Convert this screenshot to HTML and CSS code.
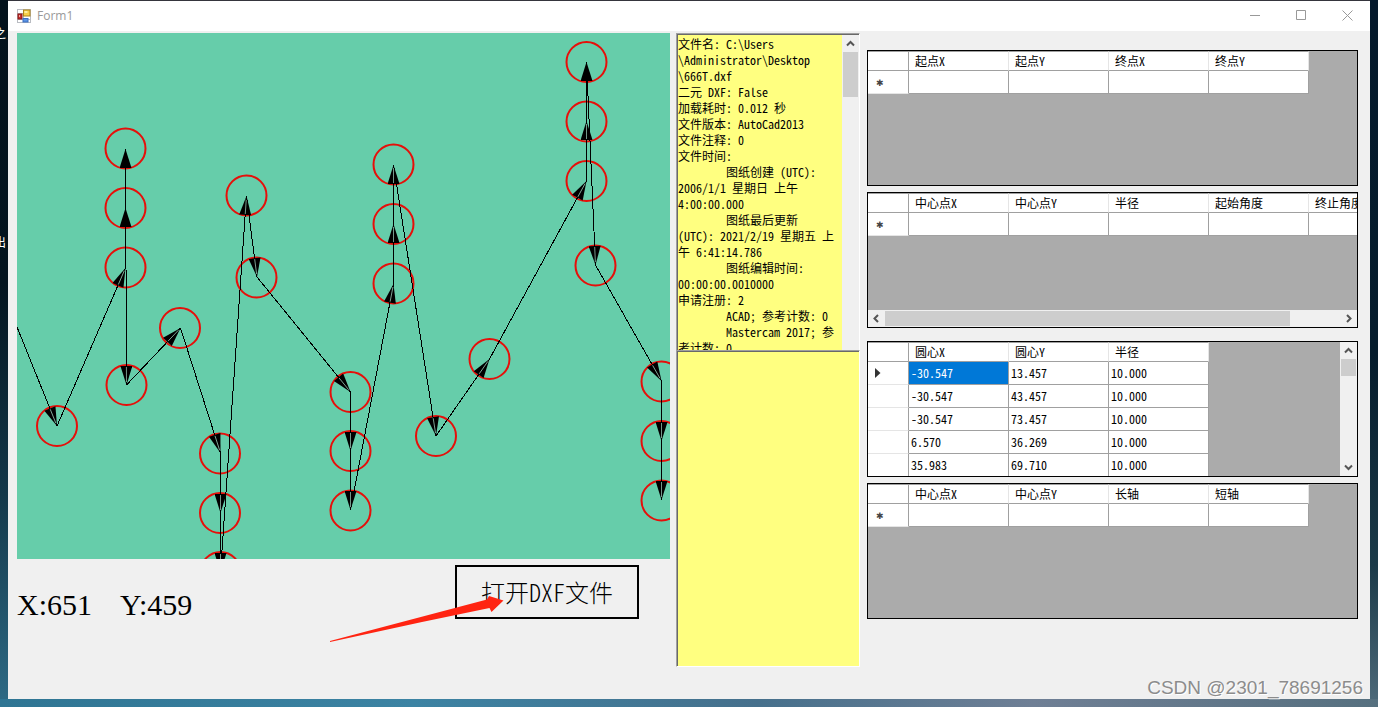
FILE: index.html
```html
<!DOCTYPE html>
<html lang="zh-CN">
<head>
<meta charset="utf-8">
<title>Form1</title>
<link rel="stylesheet" href="styles.css">
</head>
<body>
<span class="desk-label desk-label-a">之</span>
<span class="desk-label desk-label-b">出</span>
<main class="window">
  <header class="titlebar">
    <svg class="app-icon" width="14" height="14" viewBox="0 0 14 14" aria-hidden="true">
      <rect x=".5" y=".5" width="13" height="13" fill="#fff" stroke="#b9bcc2"/>
      <path d="M1 4.500h6M1 10.500h12M6.500 7v7" stroke="#b9bcc2"/>
      <rect x="6.500" y="1" width="6.500" height="6" fill="#f8d04a" stroke="#b08618"/>
      <rect x="7.500" y="2" width="3" height="2" fill="#fdeea0"/>
      <rect x="1" y="5" width="4" height="5" fill="#c8302c" stroke="#8a1514"/>
      <rect x="2" y="6" width="1" height="2" fill="#f2a09a"/>
      <rect x="6" y="9.500" width="5" height="3.500" fill="#5a93e4" stroke="#3a6ec2"/>
    </svg>
    <h1 class="title">Form1</h1>
    <div class="controls">
      <button class="control" aria-label="最小化"><svg width="11" height="11" viewBox="0 0 11 11"><path d="M0 5.500h10"/></svg></button>
      <button class="control" aria-label="最大化"><svg width="11" height="11" viewBox="0 0 11 11"><path d="M.5.5h9v9h-9z"/></svg></button>
      <button class="control" aria-label="关闭"><svg width="11" height="11" viewBox="0 0 11 11"><path d="M.5.5l10 10M10.500.5l-10 10"/></svg></button>
    </div>
  </header>

  <div class="content">
    <section class="left">
      <svg class="drawing" viewBox="17 33 653 526" role="img" aria-label="DXF 图形">
        <defs>
          <marker id="head" markerUnits="userSpaceOnUse" markerWidth="22" markerHeight="12" refX="20" refY="6" orient="auto">
            <path d="M1 0L20 6L1 12z" fill="#000"/>
            <path d="M2 6H17" stroke="#a5d8c4" stroke-width=".7"/>
          </marker>
          <marker id="solid" markerUnits="userSpaceOnUse" markerWidth="22" markerHeight="12" refX="20" refY="6" orient="auto">
            <path d="M1 0L20 6L1 12z" fill="#000"/>
          </marker>
        </defs>
        <g class="circles">
          <circle cx="57" cy="426" r="20"/><circle cx="125.500" cy="148.500" r="20"/><circle cx="125.500" cy="208" r="20"/>
          <circle cx="125.500" cy="267.500" r="20"/><circle cx="126.500" cy="385" r="20"/><circle cx="180" cy="328" r="20"/>
          <circle cx="220" cy="453.500" r="20"/><circle cx="220" cy="513" r="20"/><circle cx="220.500" cy="572" r="20"/>
          <circle cx="246.500" cy="195.500" r="20"/><circle cx="256.500" cy="277.500" r="20"/><circle cx="350.500" cy="392" r="20"/>
          <circle cx="350.500" cy="451" r="20"/><circle cx="350.500" cy="510.500" r="20"/><circle cx="393.500" cy="164.500" r="20"/>
          <circle cx="393.500" cy="224" r="20"/><circle cx="393.500" cy="283.500" r="20"/><circle cx="436" cy="436" r="20"/>
          <circle cx="489.500" cy="359" r="20"/><circle cx="586.500" cy="62" r="20"/><circle cx="586.500" cy="121.500" r="20"/>
          <circle cx="586.500" cy="181" r="20"/><circle cx="595.500" cy="265.500" r="20"/><circle cx="661.500" cy="381.500" r="20"/>
          <circle cx="661.500" cy="441" r="20"/><circle cx="661.500" cy="500.500" r="20"/>
        </g>
        <g class="moves">
          <path d="M17 327L57 426"/><path d="M57 426L125.500 268"/>
          <path class="full" d="M125.500 268V208"/><path class="full" d="M125.500 208V149"/>
          <path d="M125.500 149L126.500 385"/><path d="M126.500 385L180.500 328"/><path d="M180.500 328L220.500 453"/>
          <path d="M220.500 453V513"/><path d="M220.500 513V572"/><path d="M220.500 572L246.500 196"/>
          <path d="M246.500 196L257 277"/><path d="M257 277L350.500 392"/><path d="M350.500 392V451"/>
          <path d="M350.500 451V510"/><path d="M350.500 510L393.500 284"/><path d="M393.500 284V224"/>
          <path d="M393.500 224V165"/><path d="M393.500 165L436 436"/><path d="M436 436L489.500 359"/>
          <path d="M489.500 359L586.500 181"/><path d="M586.500 181V121"/><path class="full" d="M586.500 121V62"/>
          <path d="M586.500 62L595.500 265"/><path d="M595.500 265L661.500 381"/><path d="M661.500 381V441"/>
          <path d="M661.500 441V500"/>
        </g>
      </svg>
      <div class="footer">
        <p class="coords"><span>X:651</span><span>Y:459</span></p>
        <div class="open-wrap">
          <button class="open">打开DXF文件</button>
          <svg class="pointer" width="176" height="50" viewBox="0 0 176 50" aria-hidden="true"><path d="M0 48L157 6.500L159 3L173.500 7.500L161.500 19L159.500 15L92 29L0 49z" fill="#ff2412"/></svg>
        </div>
      </div>
    </section>

    <section class="middle">
      <div class="log-box">
        <textarea class="log" readonly aria-label="文件信息" wrap="off">文件名: C:\Users
\Administrator\Desktop
\666T.dxf
二元 DXF: False
加载耗时: 0.012 秒
文件版本: AutoCad2013
文件注释: 0
文件时间:
	图纸创建 (UTC):
2006/1/1 星期日 上午
4:00:00.000
	图纸最后更新
(UTC): 2021/2/19 星期五 上
午 6:41:14.786
	图纸编辑时间:
00:00:00.0010000
申请注册: 2
	ACAD; 参考计数: 0
	Mastercam 2017; 参
考计数: 0</textarea>
        <div class="vbar">
          <svg class="chev" width="17" height="17" viewBox="0 0 17 17"><path d="M5 10.500L8.500 7L12 10.500"/></svg>
          <div class="vthumb tall"></div>
        </div>
      </div>
      <textarea class="notes" aria-label="输出"></textarea>
    </section>

    <section class="right">
      <div class="grid">
        <table>
          <thead><tr><th class="rh"></th><th>起点X</th><th>起点Y</th><th>终点X</th><th>终点Y</th></tr></thead>
          <tbody><tr><th class="rh star">✱</th><td></td><td></td><td></td><td></td></tr></tbody>
        </table>
      </div>
      <div class="grid stacked">
        <div class="view">
          <table>
            <thead><tr><th class="rh"></th><th>中心点X</th><th>中心点Y</th><th>半径</th><th>起始角度</th><th>终止角度</th></tr></thead>
            <tbody><tr><th class="rh star">✱</th><td></td><td></td><td></td><td></td><td></td></tr></tbody>
          </table>
        </div>
        <div class="hbar">
          <svg class="chev" width="17" height="17" viewBox="0 0 17 17"><path d="M10 5L6.500 8.500L10 12"/></svg>
          <div class="htrack"><div class="hthumb"></div></div>
          <svg class="chev" width="17" height="17" viewBox="0 0 17 17"><path d="M7 5L10.500 8.500L7 12"/></svg>
        </div>
      </div>
      <div class="grid apart side">
        <div class="view">
          <table>
            <thead><tr><th class="rh"></th><th>圆心X</th><th>圆心Y</th><th>半径</th></tr></thead>
            <tbody>
              <tr><th class="rh current"><svg width="6" height="10" viewBox="0 0 6 10"><path d="M0 0L5.500 5L0 10z"/></svg></th><td class="picked">-30.547</td><td>13.457</td><td>10.000</td></tr>
              <tr><th class="rh"></th><td>-30.547</td><td>43.457</td><td>10.000</td></tr>
              <tr><th class="rh"></th><td>-30.547</td><td>73.457</td><td>10.000</td></tr>
              <tr><th class="rh"></th><td>6.570</td><td>36.269</td><td>10.000</td></tr>
              <tr><th class="rh"></th><td>35.983</td><td>69.710</td><td>10.000</td></tr>
            </tbody>
          </table>
        </div>
        <div class="vbar">
          <svg class="chev" width="17" height="17" viewBox="0 0 17 17"><path d="M5 10.500L8.500 7L12 10.500"/></svg>
          <div class="vthumb"></div>
          <svg class="chev last" width="17" height="17" viewBox="0 0 17 17"><path d="M5 6.500L8.500 10L12 6.500"/></svg>
        </div>
      </div>
      <div class="grid">
        <table>
          <thead><tr><th class="rh"></th><th>中心点X</th><th>中心点Y</th><th>长轴</th><th>短轴</th></tr></thead>
          <tbody><tr><th class="rh star">✱</th><td></td><td></td><td></td><td></td></tr></tbody>
        </table>
      </div>
    </section>
  </div>
  <span class="watermark">CSDN @2301_78691256</span>
</main>
</body>
</html>
```
FILE: styles.css
```css
* { box-sizing: border-box; }

body {
  margin: 0;
  min-height: 100vh;
  padding: 1px 8px 8px;
  position: relative;
  overflow: hidden;
  font: 12px/16px "Noto Sans CJK SC", sans-serif;
  font-feature-settings: "hwid";
  color: #000;
  background:
    linear-gradient(90deg, #2f7593, #3c83a3 30%, #46708c 55%, #6f7f95 75%, #56707f) bottom / 100% 8px no-repeat,
    linear-gradient(#03121c, #04141f 40%, #14384a 70%, #2e6b86) left / 8px 100% no-repeat,
    linear-gradient(#04192b, #051c2c 50%, #1b3a48 80%, #4f6b7b) right / 8px 100% no-repeat,
    #35353d;
}

.desk-label {
  position: absolute;
  right: calc(100% - 6px);
  color: #fff;
}
.desk-label-a { top: 25px; }
.desk-label-b { top: 234px; }

.window {
  position: relative;
  min-height: calc(100vh - 9px);
  background: #f0f0f0;
}

.titlebar {
  display: flex;
  align-items: center;
  height: 30px;
  padding: 0 0 1px 9px;
  background: #fff;
}
.title {
  flex: 1;
  margin: 0 0 0 6px;
  font: 12px/16px "Open Sans", sans-serif;
  color: #999;
}
.controls { display: flex; }
.control {
  width: 46px;
  height: 28px;
  padding: 0;
  border: 0;
  background: none;
}
.control svg { display: block; margin: 0 auto; }
.control path { fill: none; stroke: #999; }

.content {
  display: grid;
  grid-template-columns: minmax(0, 1fr) 184px 492px;
  gap: 6px;
  align-items: start;
  padding: 2px 12px 0 9px;
}

.drawing {
  display: block;
  width: 100%;
  background: #66cdaa;
}
.circles { fill: none; stroke: #e60f0a; stroke-width: 2; }
.moves { stroke: #000; shape-rendering: crispEdges; }
.moves path { marker-end: url(#head); }
.moves .full { marker-end: url(#solid); }

.footer {
  display: flex;
  justify-content: space-between;
  align-items: flex-start;
  padding: 6px 31px 0 0;
}
.coords {
  display: flex;
  gap: 28px;
  margin: 24px 0 0;
  font: 30px/32px "Liberation Serif", serif;
}
.open-wrap { position: relative; }
.open {
  width: 184px;
  height: 54px;
  padding: 0;
  border: 2px solid #000;
  background: #f0f0f0;
  font: 300 24px/32px "Noto Sans CJK SC", sans-serif;
  font-feature-settings: "hwid";
  color: #000;
}
.pointer {
  position: absolute;
  top: 28px;
  left: -125px;
  pointer-events: none;
}

.log-box, .notes {
  width: 100%;
  height: 317px;
  border: 1px solid #a0a0a0;
  border-right-color: #fff;
  background: #ffff80;
  box-shadow: inset 1px 1px #696969;
}
.log-box {
  display: flex;
  padding: 1px 0 0 1px;
  border-bottom: 0;
}
.notes { border-bottom-color: #fff; }
.log, .notes {
  display: block;
  margin: 0;
  outline: 0;
  resize: none;
}
.log {
  flex: 1;
  min-width: 0;
  padding: 1px 0 0;
  border: 0;
  overflow: hidden;
  background: #ffff80;
  font: inherit;
  font-feature-settings: inherit;
  tab-size: 48px;
}

.vbar {
  display: flex;
  flex-direction: column;
  width: 17px;
  background: #f0f0f0;
}
.vthumb {
  height: 17px;
  margin: 0 1px;
  background: #cdcdcd;
}
.tall { height: 45px; }
.last { margin-top: auto; }
.chev { display: block; flex: none; }
.chev path { fill: none; stroke: #555; stroke-width: 2; }

.right {
  display: flex;
  flex-direction: column;
  gap: 6px;
  padding: 17px 0 0 1px;
}
.grid {
  height: 136px;
  overflow: hidden;
  border: 1px solid #000;
  background: #ababab;
}
.apart { margin-top: 7px; }
.stacked { display: flex; flex-direction: column; }
.side { display: flex; }
.view { flex: 1; min-width: 0; min-height: 0; overflow: hidden; }

table {
  table-layout: fixed;
  width: 0;
  border-collapse: separate;
  border-spacing: 0;
}
th, td {
  width: 100px;
  height: 23px;
  padding: 0 0 0 2px;
  overflow: hidden;
  border: solid #a0a0a0;
  border-width: 0 1px 1px 0;
  background: #fff;
  font-weight: 400;
  line-height: 16px;
  text-align: left;
  white-space: nowrap;
}
thead th {
  height: 20px;
  padding: 0 0 0 6px;
  border-top-width: 1px;
  border-right-color: #e5e5e5;
}
.rh { width: 41px; padding: 0 0 0 8px; }
tbody .rh { border-bottom-color: #e5e5e5; }
thead .rh { border-right-color: #a0a0a0; }
.star { padding-top: 2px; font: 700 9px/10px "DejaVu Sans", sans-serif; color: #444; }
.current { padding-left: 7px; }
.current svg { display: block; fill: #333; }
.picked { background: #0078d7; color: #fff; }

.hbar {
  display: flex;
  height: 17px;
  background: #f0f0f0;
}
.htrack { flex: 1; }
.hthumb {
  width: 89%;
  height: 15px;
  margin-top: 1px;
  background: #cdcdcd;
}

.watermark {
  position: absolute;
  right: 7px;
  bottom: 0;
  font: 19px/22px "Liberation Sans", sans-serif;
  color: #8c8c8c;
  text-shadow: 1px 1px #fff;
}
```
